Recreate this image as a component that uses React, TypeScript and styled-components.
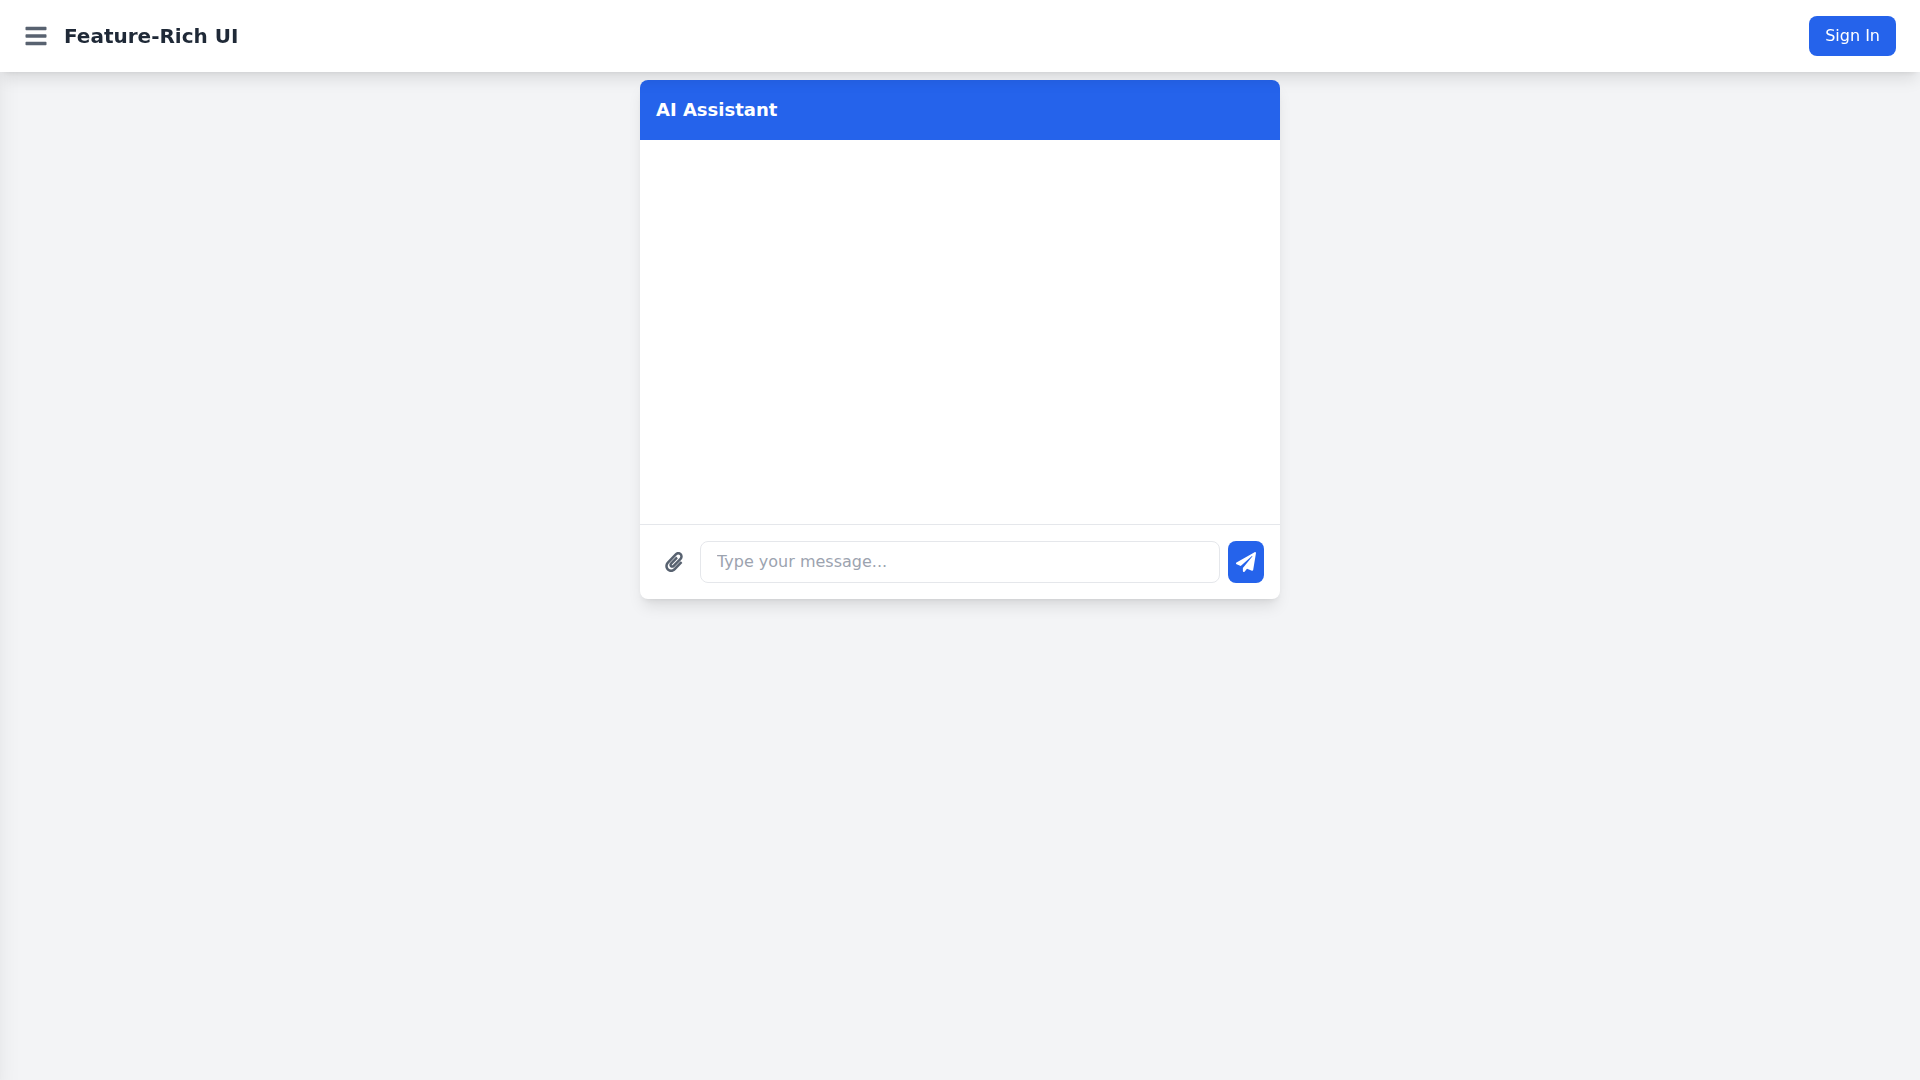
import React, { useState } from 'react';
import styled, { createGlobalStyle } from 'styled-components';
import { FaBars, FaPaperclip, FaPaperPlane } from 'react-icons/fa';

const GlobalStyle = createGlobalStyle`
  *, *::before, *::after { box-sizing: border-box; }
  body {
    margin: 0;
    background: #f3f4f6;
    color: #1f2937;
    font-family: "DejaVu Sans", sans-serif;
    font-size: 16px;
    line-height: 24px;
  }
  h1, h2 { margin: 0; }
  button, input { font: inherit; }
  button { border: 0; padding: 0; background: none; cursor: pointer; }
`;

const Page = styled.div`
  min-height: 100vh;
  overflow: hidden;
`;

const TopBar = styled.header`
  position: relative;
  z-index: 2;
  display: flex;
  align-items: center;
  justify-content: space-between;
  padding: 16px 24px;
  background: #fff;
  box-shadow: 0 10px 15px -3px rgba(0, 0, 0, 0.1), 0 4px 6px -4px rgba(0, 0, 0, 0.1);
`;

const Brand = styled.div`
  display: flex;
  align-items: center;
  gap: 16px;
`;

const Title = styled.h1`
  font-size: 20px;
  line-height: 28px;
  font-weight: 700;
`;

const IconButton = styled.button<{ $pad?: number }>`
  display: flex;
  align-items: center;
  padding: ${(p) => p.$pad ?? 0}px;
  color: #586270;
`;

const SignInButton = styled.button`
  padding: 8px 16px;
  border-radius: 8px;
  background: #2563eb;
  color: #fff;
`;

const Drawer = styled.aside`
  position: fixed;
  top: 0;
  bottom: 0;
  left: 0;
  z-index: 1;
  width: 256px;
  background: #fff;
  transform: translateX(-100%);
  box-shadow: 0 20px 25px -5px rgba(0, 0, 0, 0.1), 0 8px 10px -6px rgba(0, 0, 0, 0.1);
`;

const Main = styled.main`
  padding: 8px 16px;
`;

const Card = styled.section`
  max-width: 640px;
  margin: 0 auto;
  overflow: hidden;
  border-radius: 8px;
  background: #fff;
  box-shadow: 0 10px 15px -3px rgba(0, 0, 0, 0.1), 0 4px 6px -4px rgba(0, 0, 0, 0.1);
`;

const CardHeader = styled.div`
  padding: 16px;
  background: #2563eb;
  color: #fff;
`;

const CardTitle = styled.h2`
  font-size: 18px;
  line-height: 28px;
  font-weight: 600;
`;

const Messages = styled.div`
  height: 384px;
  padding: 16px;
  overflow-y: auto;
`;

const Composer = styled.form`
  display: flex;
  gap: 8px;
  padding: 16px;
  border-top: 1px solid #e5e7eb;
`;

const MessageInput = styled.input`
  flex: 1;
  min-width: 0;
  padding: 8px 16px;
  border: 1px solid #e5e7eb;
  border-radius: 8px;
  background: #fff;
  color: inherit;
  &::placeholder { color: #9ca3af; opacity: 1; }
`;

const SendButton = styled.button`
  display: flex;
  align-items: center;
  padding: 8px;
  border-radius: 8px;
  background: #2563eb;
  color: #fff;
`;

export default function App() {
  const [message, setMessage] = useState('');
  return (
    <Page>
      <GlobalStyle />
      <TopBar>
        <Brand>
          <IconButton type="button" aria-label="Open menu">
            <FaBars size={24} />
          </IconButton>
          <Title>Feature-Rich UI</Title>
        </Brand>
        <SignInButton type="button">Sign In</SignInButton>
      </TopBar>
      <Drawer aria-hidden="true" />
      <Main>
        <Card>
          <CardHeader>
            <CardTitle>AI Assistant</CardTitle>
          </CardHeader>
          <Messages />
          <Composer onSubmit={(e) => e.preventDefault()}>
            <IconButton type="button" aria-label="Attach file" $pad={8}>
              <FaPaperclip size={20} />
            </IconButton>
            <MessageInput
              type="text"
              aria-label="Message"
              placeholder="Type your message..."
              value={message}
              onChange={(e) => setMessage(e.target.value)}
            />
            <SendButton type="submit" aria-label="Send message">
              <FaPaperPlane size={20} />
            </SendButton>
          </Composer>
        </Card>
      </Main>
    </Page>
  );
}
